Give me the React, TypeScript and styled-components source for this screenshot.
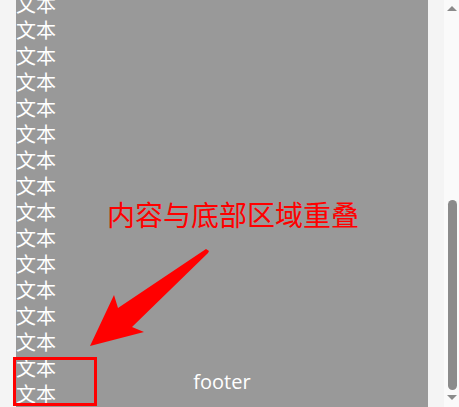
import React from "react";
import styled, { createGlobalStyle } from "styled-components";

const Global = createGlobalStyle`
  html, body { margin: 0; padding: 0; background: #f4f4f4; overflow: hidden; }
  #root { height: 407px; }
`;

const Page = styled.div`
  position: relative;
  display: flex;
  width: 459px;
  height: 407px;
  font-family: "Noto Sans CJK SC", "Noto Sans", sans-serif;
`;

const Main = styled.div`
  flex: 1;
  min-width: 0;
  padding: 0 16px;
`;

const Content = styled.div`
  position: relative;
  height: 100%;
  background: #999999;
  overflow: hidden;
`;

const Lines = styled.div`
  display: flex;
  flex-direction: column;
  margin-top: -9px;
`;

const Line = styled.div`
  color: #ffffff;
  font-size: 20px;
  line-height: 26px;
  height: 26px;
  white-space: nowrap;
`;

const Footer = styled.div`
  position: absolute;
  left: 0;
  right: 0;
  bottom: 0;
  height: 50px;
  line-height: 50px;
  text-align: center;
  color: #ffffff;
  font-family: "Open Sans", "Liberation Sans", sans-serif;
  font-size: 20px;
`;

const Scrollbar = styled.div`
  width: 15px;
  display: flex;
  flex-direction: column;
  background: #fafafa;
`;

const ScrollButton = styled.div`
  height: 17px;
  display: flex;
  align-items: ${(p: { $dir: "up" | "down" }) => (p.$dir === "up" ? "flex-start" : "flex-start")};
  justify-content: center;
  padding-top: ${(p: { $dir: "up" | "down" }) => (p.$dir === "up" ? "6px" : "5px")};
  box-sizing: border-box;
`;

const Track = styled.div`
  flex: 1;
  display: flex;
  flex-direction: column;
  justify-content: flex-end;
  align-items: center;
  padding-left: 1px;
`;

const Thumb = styled.div`
  width: 9px;
  height: 190px;
  border-radius: 5px;
  background: #8b8b8b;
`;

const Note = styled.div`
  position: absolute;
  left: 107px;
  top: 200px;
  color: #ff0000;
  font-size: 28px;
  line-height: 28px;
  white-space: nowrap;
`;

const ArrowSvg = styled.svg`
  position: absolute;
  left: 80px;
  top: 240px;
  overflow: visible;
`;

const Highlight = styled.div`
  position: absolute;
  left: 13px;
  top: 357px;
  width: 84px;
  height: 49px;
  border: 3px solid #ff0000;
  box-sizing: border-box;
`;

const lines = Array.from({ length: 17 }, (_, i) => i);

export default function App() {
  return (
    <>
      <Global />
      <Page>
        <Main>
          <Content>
            <Lines>
              {lines.map((i) => (
                <Line key={i}>文本</Line>
              ))}
            </Lines>
            <Footer>footer</Footer>
          </Content>
        </Main>
        <Scrollbar>
          <ScrollButton $dir="up">
            <svg width="10" height="5" viewBox="0 0 10 5">
              <polygon points="0,5 5,0 10,5" fill="#8b8b8b" />
            </svg>
          </ScrollButton>
          <Track>
            <Thumb />
          </Track>
          <ScrollButton $dir="down">
            <svg width="10" height="5" viewBox="0 0 10 5">
              <polygon points="0,0 10,0 5,5" fill="#8b8b8b" />
            </svg>
          </ScrollButton>
        </Scrollbar>
        <Note>内容与底部区域重叠</Note>
        <ArrowSvg width="135" height="110" viewBox="0 0 135 110">
          <polygon
            points="10,106 34,55 38,68 126,9 129,11 128,13 52,87 64,92"
            fill="#ff0000"
            strokeLinejoin="round"
          />
        </ArrowSvg>
        <Highlight />
      </Page>
    </>
  );
}
